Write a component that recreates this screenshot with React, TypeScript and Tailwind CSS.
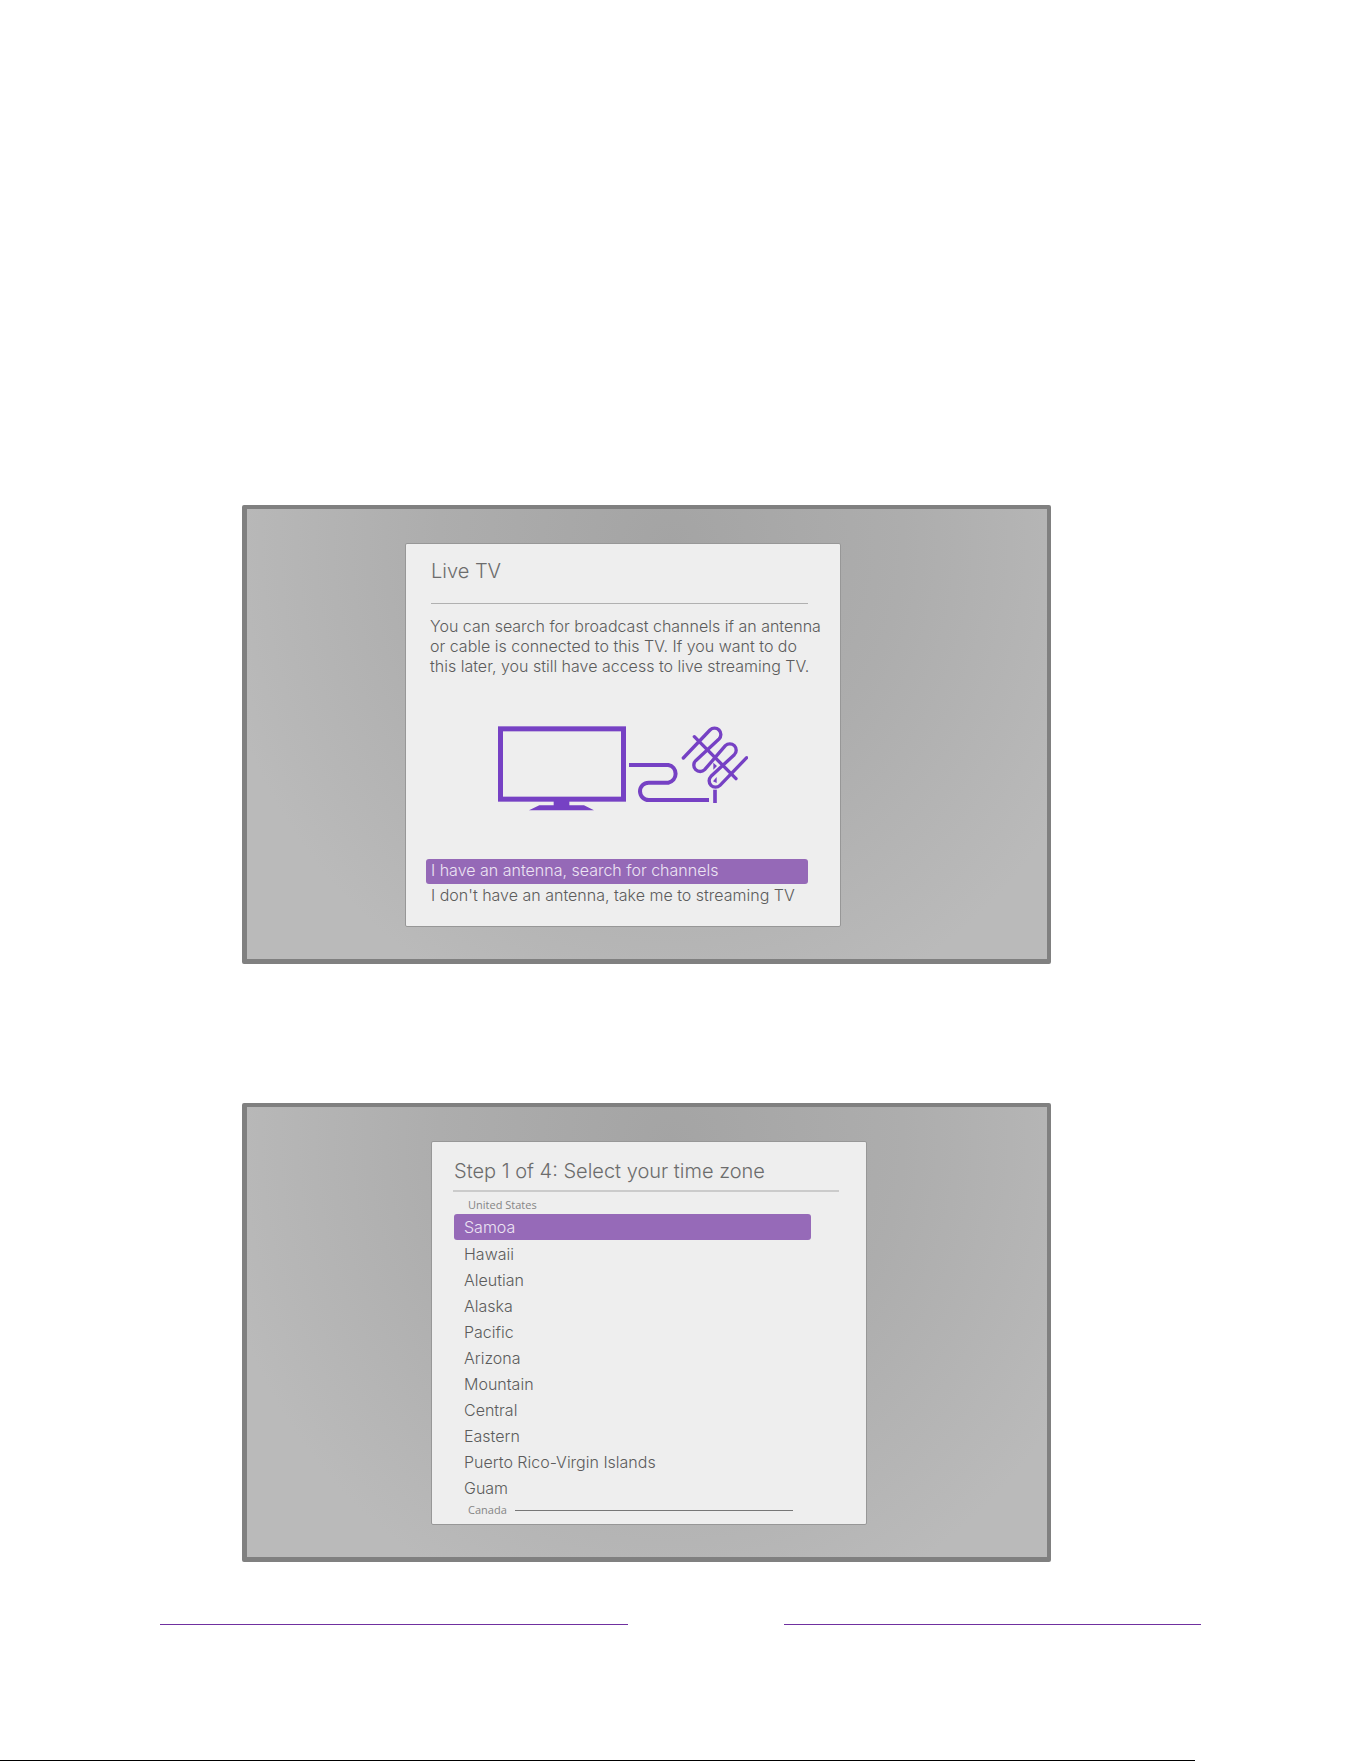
import { useState, type ReactNode } from "react";

const zones = [
  "Samoa",
  "Hawaii",
  "Aleutian",
  "Alaska",
  "Pacific",
  "Arizona",
  "Mountain",
  "Central",
  "Eastern",
  "Puerto Rico-Virgin Islands",
  "Guam",
];

function Screen({ children }: { children: ReactNode }) {
  return (
    <section className="mx-4 rounded-xs border-[5px] border-t-4 border-r-4 border-[#808080] bg-[radial-gradient(ellipse_58%_110%_at_53%_8%,#a4a4a4_0%,#adadad_50%,#bababa_100%)] md:mr-0 md:ml-[82px] md:max-w-[809px]">
      {children}
    </section>
  );
}

function AntennaArt() {
  return (
    <svg viewBox="54 78 750 255" className="h-[85px] w-[250px]" fill="none" stroke="#7641c4" role="img" aria-label="TV connected to an antenna">
      <rect x="61.500" y="86.500" width="369" height="211" strokeWidth="15" />
      <path d="M221 300H268V316H312L342 331H147L178 316H221Z" fill="#7641c4" stroke="none" />
      <path d="M447 195H565A27 27 0 0 1 565 248H506A26 26 0 0 0 506 300H687" strokeWidth="12" />
      <path d="M705 269V309" strokeWidth="11" />
      <path d="M643 110L768 236" strokeWidth="10" strokeLinecap="round" />
      <path
        d="M610 174L690 90A19 19 0 0 1 717 117L647 182A19 19 0 0 0 674 209L736 137A19 19 0 0 1 763 164L693 229A19 19 0 0 0 720 256L800 173"
        strokeWidth="10"
        strokeLinecap="round"
        strokeLinejoin="round"
      />
      <path d="M700 188L711 198L700 209ZM710 231V249L699 244Z" fill="#7641c4" stroke="none" />
    </svg>
  );
}

function LiveTv() {
  const [choice, setChoice] = useState(0);
  const options = ["I have an antenna, search for channels", "I don't have an antenna, take me to streaming TV"];
  return (
    <Screen>
      <div className="mx-auto mt-[34px] mb-[32px] w-full max-w-[436px] rounded-xs border border-[#979797] bg-[#eeeeee] pt-[13px] pr-8 pb-[18px] pl-5 md:ml-[158px]">
        <h2 className="pl-[5px] text-[20px] leading-7 font-light text-[#6c6c6c]">Live TV</h2>
        <hr className="mt-[18px] ml-[5px] border-[#b0b0b0]" />
        <p className="mt-3 -mr-6 ml-1 text-[16px] leading-5 font-light text-[#5c5c5c]">
          <span className="block">You can search for broadcast channels if an antenna</span>
          <span className="block">or cable is connected to this TV. If you want to do</span>
          <span className="block">this later, you still have access to live streaming TV.</span>
        </p>
        <div className="mt-[50px] mb-[48px] flex justify-center pl-3">
          <AntennaArt />
        </div>
        <div className="flex flex-col">
          {options.map((label, i) => (
            <button
              key={label}
              type="button"
              aria-pressed={choice === i}
              onClick={() => setChoice(i)}
              className={
                "flex h-[25px] items-start rounded-[3px] pl-[5px] text-left text-[16px] leading-[22px] font-light whitespace-nowrap last:h-6 " +
                (choice === i ? "bg-[#9569b7] text-[#ece4f3]" : "text-[#5c5c5c]")
              }
            >
              {label}
            </button>
          ))}
        </div>
      </div>
    </Screen>
  );
}

function TimeZone() {
  const [zone, setZone] = useState("Samoa");
  return (
    <Screen>
      <div className="mx-auto mt-[34px] mb-[32px] w-full max-w-[436px] rounded-xs border border-[#979797] bg-[#eeeeee] pt-[15px] pr-[27px] pb-[6px] pl-[21px] md:ml-[184px]">
        <h2 className="pl-px text-[20px] leading-7 font-light text-[#6c6c6c]">Step 1 of 4: Select your time zone</h2>
        <hr className="mt-[5px] border-t-2 border-[#cbcbcb]" />
        <h3 className="mt-[5px] pl-[15px] font-['Open_Sans',sans-serif] text-[11px] leading-4 text-[#858585]">United States</h3>
        <ul className="mt-px mr-[28px] ml-px">
          {zones.map((name) => (
            <li key={name} className="first:mb-px">
              <button
                type="button"
                aria-pressed={zone === name}
                onClick={() => setZone(name)}
                className={
                  "block h-[26px] w-full rounded-[3px] pl-[10px] text-left text-[16px] leading-[26px] font-light " +
                  (zone === name ? "bg-[#966ab8] text-[#ece4f3]" : "text-[#5c5c5c]")
                }
              >
                {name}
              </button>
            </li>
          ))}
        </ul>
        <div className="mt-px mr-[46px] flex items-center gap-2 pl-[15px]">
          <h3 className="font-['Open_Sans',sans-serif] text-[11px] leading-4 text-[#858585]">Canada</h3>
          <hr className="grow border-[#777777]" />
        </div>
      </div>
    </Screen>
  );
}

export default function App() {
  return (
    <div className="flex min-h-screen flex-col bg-white font-['Inter',sans-serif]">
      <main className="mx-auto flex w-full max-w-[1041px] flex-col pt-[505px]">
        <LiveTv />
        <div className="mt-[139px]">
          <TimeZone />
        </div>
        <div className="mt-[62px] flex gap-[156px]">
          <hr className="w-[45%] border-[#7030a0]" />
          <hr className="w-[40%] border-[#7030a0]" />
        </div>
      </main>
      <hr className="mt-auto mr-[166px] border-black" />
    </div>
  );
}
